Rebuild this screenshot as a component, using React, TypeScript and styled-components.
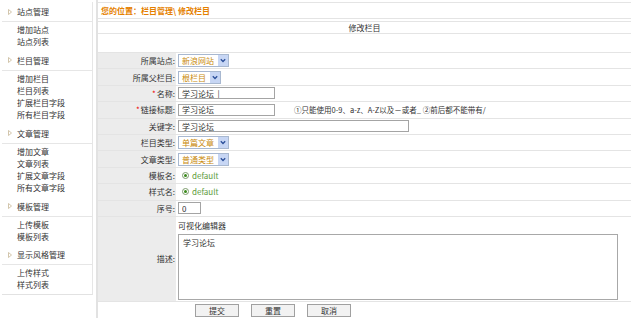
import React from 'react'
import styled, { createGlobalStyle } from 'styled-components'

const GlobalStyle = createGlobalStyle`
    body {
        margin: 0;
        background: #fff;
        font-family: "Noto Sans CJK SC", "Noto Sans", sans-serif;
        font-size: 8px;
        color: #333;
    }
`

const Page = styled.div`
    display: flex;
    align-items: stretch;
    width: 631px;
    height: 318px;
    overflow: hidden;
`

const Sidebar = styled.aside`
    width: 90px;
    margin: 2px 0 0 2px;
    border-right: 1px solid #e6e6e6;
    border-bottom: 1px solid #e2e2e2;
    align-self: flex-start;
`

const MenuHead = styled.div`
    height: 20px;
    box-sizing: border-box;
    display: flex;
    align-items: center;
    gap: 5px;
    padding-left: 6px;
    border-bottom: 1px solid #e6e6e6;
    color: #333;
`

const MenuList = styled.ul`
    list-style: none;
    margin: 0;
    padding: 2px 0 2px 15px;
    border-bottom: 1px solid #e2e2e2;

    &:last-child {
        border-bottom: none;
    }
`

const MenuItem = styled.li`
    line-height: 12.25px;
    height: 12.25px;
    color: #333;
`

const Main = styled.main`
    flex: 1;
    margin-left: 3px;
    border-left: 2px solid #e2e2e2;
    display: flex;
    flex-direction: column;
`

const Crumb = styled.div`
    margin-top: 2px;
    height: 17px;
    box-sizing: border-box;
    border-top: 1px solid #e4e4e4;
    border-bottom: 1px solid #e4e4e4;
    display: flex;
    align-items: center;
    padding-left: 3px;
    color: #e57f00;
    font-weight: bold;
`

const Table = styled.div`
    margin-top: 2px;
    border-top: 1px solid #e4e4e4;
`

const Caption = styled.div`
    height: 11px;
    line-height: 11px;
    text-align: center;
    border-bottom: 1px solid #e4e4e4;
`

const Toolbar = styled.div`
    height: 19px;
    border-bottom: 1px solid #e4e4e4;
    box-sizing: border-box;
`

const Row = styled.div<{ $h?: number }>`
    display: grid;
    grid-template-columns: 78px 1fr;
    height: ${p => p.$h ?? 16.4}px;
    box-sizing: border-box;
    border-bottom: 1px solid #e4e4e4;
`

const Label = styled.div`
    background: #ececec;
    display: flex;
    align-items: center;
    justify-content: flex-end;
    padding-right: 1px;
    white-space: nowrap;
`

const Star = styled.span`
    color: #e00;
    margin-right: 1px;
`

const Value = styled.div`
    display: flex;
    align-items: center;
    padding-left: 2px;
    white-space: nowrap;
`

const DescValue = styled.div`
    display: flex;
    flex-direction: column;
    padding: 3px 0 0 2px;
`

const Hint = styled.span`
    margin-left: 19px;
    font-size: 7.5px;
    color: #333;
`

const SelectBox = styled.div<{ $w: number }>`
    width: ${p => p.$w}px;
    height: 13px;
    box-sizing: border-box;
    border: 1px solid #a8b8d0;
    display: flex;
    align-items: center;
    justify-content: space-between;
    padding-left: 3px;
    color: #c98a0c;
    background: #fff;
`

const SelectArrow = styled.span`
    width: 10px;
    height: 11px;
    background: #c7d6f4;
    display: flex;
    align-items: center;
    justify-content: center;
`

const TextInput = styled.input<{ $w: number }>`
    width: ${p => p.$w}px;
    height: 12px;
    box-sizing: border-box;
    border: 1px solid #a4a4a4;
    padding: 0 3px;
    font: inherit;
    font-size: 8px;
    color: #333;
    outline: none;
`

const Radio = styled.span`
    width: 7px;
    height: 7px;
    box-sizing: border-box;
    border: 1px solid #7a9a6a;
    border-radius: 50%;
    display: inline-flex;
    align-items: center;
    justify-content: center;
    margin: 0 3px 0 4px;

    &::after {
        content: '';
        width: 3px;
        height: 3px;
        border-radius: 50%;
        background: #3a8a1a;
    }
`

const Green = styled.span`
    color: #5a9b3a;
`

const EditorTitle = styled.div`
    height: 11px;
    line-height: 11px;
    margin-bottom: 3px;
`

const Area = styled.textarea`
    width: 440px;
    height: 66px;
    box-sizing: border-box;
    border: 1px solid #a8a8a8;
    padding: 2px 4px;
    font: inherit;
    font-size: 8px;
    color: #333;
    resize: none;
    outline: none;
`

const Buttons = styled.div`
    display: flex;
    gap: 12px;
    padding: 2px 0 0 97px;
`

const Button = styled.button`
    width: 44px;
    height: 13px;
    box-sizing: border-box;
    border: 1px solid #a0a0a0;
    background: #f2f2f2;
    font: inherit;
    font-size: 8px;
    color: #333;
    padding: 0;
`

const Arrow = () => (
    <svg width="4" height="6" viewBox="0 0 4 6">
        <path d="M0.5 0.5 L3.5 3 L0.5 5.5 Z" fill="none" stroke="#c8b898" strokeWidth="0.8" />
    </svg>
)

const Chevron = () => (
    <svg width="6" height="5" viewBox="0 0 6 5">
        <path d="M0.8 1.2 L3 3.5 L5.2 1.2" fill="none" stroke="#2b4f9a" strokeWidth="1.3" />
    </svg>
)

const Select: React.FC<{ w: number; text: string }> = ({ w, text }) => (
    <SelectBox $w={w}>
        <span>{text}</span>
        <SelectArrow><Chevron /></SelectArrow>
    </SelectBox>
)

const menu = [
    { title: '站点管理', items: ['增加站点', '站点列表'] },
    { title: '栏目管理', items: ['增加栏目', '栏目列表', '扩展栏目字段', '所有栏目字段'] },
    { title: '文章管理', items: ['增加文章', '文章列表', '扩展文章字段', '所有文章字段'] },
    { title: '模板管理', items: ['上传模板', '模板列表'] },
    { title: '显示风格管理', items: ['上传样式', '样式列表'] },
]

const App: React.FC = () => {
    return (
        <>
            <GlobalStyle />
            <Page>
                <Sidebar>
                    {menu.map(group => (
                        <div key={group.title}>
                            <MenuHead><Arrow />{group.title}</MenuHead>
                            <MenuList>
                                {group.items.map(item => <MenuItem key={item}>{item}</MenuItem>)}
                            </MenuList>
                        </div>
                    ))}
                </Sidebar>
                <Main>
                    <Crumb>您的位置：栏目管理\ 修改栏目</Crumb>
                    <Table>
                        <Caption>修改栏目</Caption>
                        <Toolbar />
                        <Row>
                            <Label>所属站点:</Label>
                            <Value><Select w={51} text="新浪网站" /></Value>
                        </Row>
                        <Row>
                            <Label>所属父栏目:</Label>
                            <Value><Select w={43} text="根栏目" /></Value>
                        </Row>
                        <Row>
                            <Label><Star>*</Star>名称:</Label>
                            <Value><TextInput $w={97} value="学习论坛  |" readOnly /></Value>
                        </Row>
                        <Row>
                            <Label><Star>*</Star>链接标题:</Label>
                            <Value>
                                <TextInput $w={97} value="学习论坛" readOnly />
                                <Hint>①只能使用0-9、a-z、A-Z以及－或者_ ②前后都不能带有/</Hint>
                            </Value>
                        </Row>
                        <Row>
                            <Label>关键字:</Label>
                            <Value><TextInput $w={231} value="学习论坛" readOnly /></Value>
                        </Row>
                        <Row>
                            <Label>栏目类型:</Label>
                            <Value><Select w={51} text="单篇文章" /></Value>
                        </Row>
                        <Row>
                            <Label>文章类型:</Label>
                            <Value><Select w={51} text="普通类型" /></Value>
                        </Row>
                        <Row>
                            <Label>模板名:</Label>
                            <Value><Radio /><Green>default</Green></Value>
                        </Row>
                        <Row>
                            <Label>样式名:</Label>
                            <Value><Radio /><Green>default</Green></Value>
                        </Row>
                        <Row>
                            <Label>序号:</Label>
                            <Value><TextInput $w={23} value="0" readOnly /></Value>
                        </Row>
                        <Row $h={85}>
                            <Label>描述:</Label>
                            <DescValue>
                                <EditorTitle>可视化编辑器</EditorTitle>
                                <Area value="学习论坛" readOnly />
                            </DescValue>
                        </Row>
                        <Buttons>
                            <Button>提交</Button>
                            <Button>重置</Button>
                            <Button>取消</Button>
                        </Buttons>
                    </Table>
                </Main>
            </Page>
        </>
    )
}

export default App
